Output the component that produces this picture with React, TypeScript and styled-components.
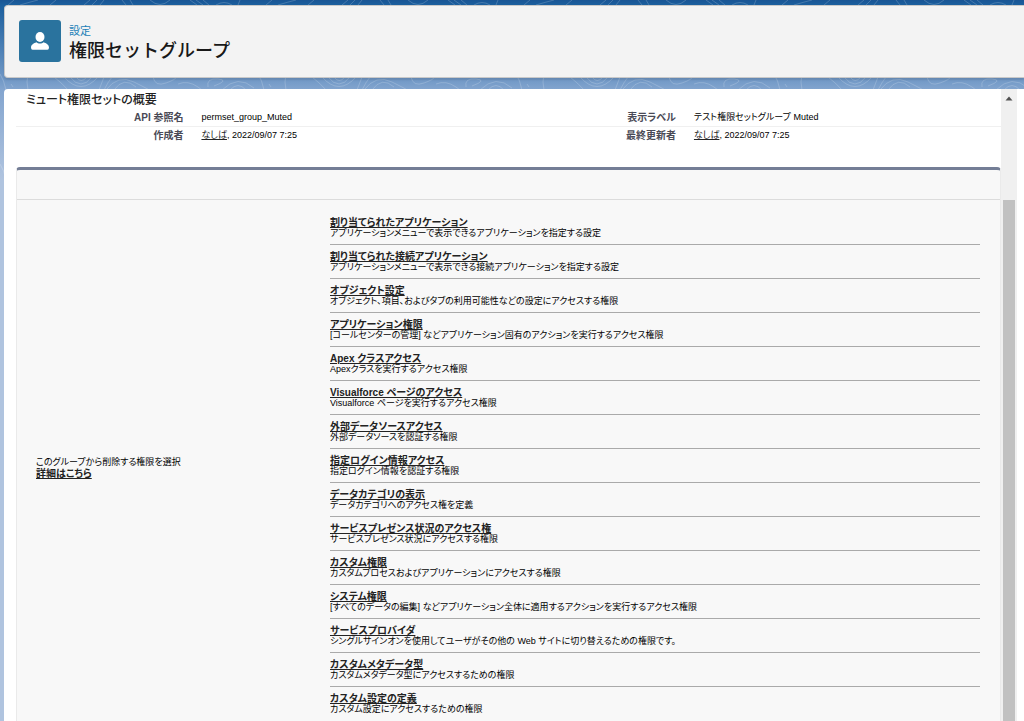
import React from 'react';
import styled, { createGlobalStyle } from 'styled-components';

const Global = createGlobalStyle`
  * { box-sizing: border-box; }
  body {
    margin: 0;
    font-family: "Liberation Sans", "Noto Sans CJK JP", sans-serif;
    font-size: 9px;
    line-height: 11px;
    color: #000;
  }
`;

const Page = styled.div`
  position: relative;
  height: 100vh;
  display: flex;
  flex-direction: column;
  gap: 11px;
  padding: 5px 0 0 4px;
  overflow: hidden;
  background: linear-gradient(#195594 0, #1b5f9e 5px, #6f97c5 78px, #83a5cf 90px, #b0c4df 180px);
`;

const Contours = styled.svg`
  position: absolute;
  top: 0;
  left: 0;
  width: 100%;
  height: 180px;
`;

const Header = styled.header`
  position: relative;
  display: flex;
  align-items: flex-start;
  gap: 8px;
  flex: none;
  padding: 14px 14px 15px;
  border: 1px solid #c9c9c9;
  border-right: 0;
  border-radius: 4px 0 0 4px;
  background: #f3f3f3;
  box-shadow: 0 2px 2px rgba(0, 0, 0, 0.1);
`;

const Badge = styled.span`
  display: grid;
  place-items: center;
  width: 42px;
  height: 42px;
  border-radius: 3px;
  background: #2a739e;
`;

const HeaderText = styled.div`
  padding-top: 2px;
`;

const Eyebrow = styled.p`
  margin: 0;
  font-size: 11px;
  line-height: 18px;
  color: #1b7fb8;
`;

const Title = styled.h1`
  margin: 0;
  font-size: 18px;
  line-height: 22px;
  font-weight: 500;
  color: #181818;
`;

const Body = styled.div`
  position: relative;
  flex: 1;
  min-height: 0;
  display: flex;
  padding-right: 7px;
  border-top-left-radius: 4px;
  background: #fff;
`;

const Main = styled.main`
  flex: 1;
  min-width: 0;
  overflow: hidden;
  padding-left: 12px;
  font-feature-settings: "palt";
`;

const Heading = styled.h2`
  margin: 0;
  padding: 3px 10px 1px;
  font-size: 12px;
  line-height: 16px;
  font-weight: 500;
  color: #222;
`;

const Details = styled.dl`
  margin: 0 0 23px;
`;

const DetailRow = styled.div`
  display: grid;
  grid-template-columns: 17fr 33fr 17fr 33fr;
  line-height: 17px;
  & + & { border-top: 1px solid #f0f0f0; }
`;

const Term = styled.dt`
  text-align: right;
  font-size: 10px;
  font-weight: 700;
  color: #4a4a56;
`;

const Value = styled.dd`
  margin: 0;
  padding-left: 18px;
`;

const Link = styled.a<{ $strong?: boolean }>`
  color: #222;
  font-size: ${p => (p.$strong ? '10px' : 'inherit')};
  font-weight: ${p => (p.$strong ? 700 : 400)};
  text-decoration: underline;
  text-decoration-thickness: 1px;
  text-underline-offset: 1px;
`;

const Panel = styled.section`
  border: 1px solid #eaeaea;
  border-top: 3px solid #747e96;
  border-radius: 4px;
  background: #f8f8f8;
`;

const PanelBar = styled.div`
  height: 30px;
  border-bottom: 1px solid #dcdcdc;
`;

const PanelBody = styled.div`
  display: grid;
  grid-template-columns: 313px 1fr;
  align-items: center;
  padding: 11px 20px 15px 0;
`;

const Intro = styled.p`
  margin: 0;
  padding: 4px 0 0 19px;
`;

const List = styled.ul`
  margin: 0;
  padding: 0;
  list-style: none;
`;

const Item = styled.li`
  padding: 6px 0 5px;
  border-bottom: 1px solid #aaa;
  &:last-child { border-color: transparent; }
`;

const Line = styled.div`
  height: 11px;
  white-space: nowrap;
`;

const Scrollbar = styled.div`
  display: flex;
  flex-direction: column;
  align-items: center;
  width: 16px;
  background: #f0f0f0;
`;

const Arrow = styled.svg`
  flex: none;
  width: 16px;
  height: 18px;
  margin-bottom: 93px;
`;

const Thumb = styled.div`
  flex: 1;
  width: 12px;
  background: #c1c1c1;
`;

const items = [
  ['割り当てられたアプリケーション', 'アプリケーションメニューで表示できるアプリケーションを指定する設定'],
  ['割り当てられた接続アプリケーション', 'アプリケーションメニューで表示できる接続アプリケーションを指定する設定'],
  ['オブジェクト設定', 'オブジェクト、項目、およびタブの利用可能性などの設定にアクセスする権限'],
  ['アプリケーション権限', '[コールセンターの管理] などアプリケーション固有のアクションを実行するアクセス権限'],
  ['Apex クラスアクセス', 'Apexクラスを実行するアクセス権限'],
  ['Visualforce ページのアクセス', 'Visualforce ページを実行するアクセス権限'],
  ['外部データソースアクセス', '外部データソースを認証する権限'],
  ['指定ログイン情報アクセス', '指定ログイン情報を認証する権限'],
  ['データカテゴリの表示', 'データカテゴリへのアクセス権を定義'],
  ['サービスプレゼンス状況のアクセス権', 'サービスプレゼンス状況にアクセスする権限'],
  ['カスタム権限', 'カスタムプロセスおよびアプリケーションにアクセスする権限'],
  ['システム権限', '[すべてのデータの編集] などアプリケーション全体に適用するアクションを実行するアクセス権限'],
  ['サービスプロバイダ', 'シングルサインオンを使用してユーザがその他の Web サイトに切り替えるための権限です。'],
  ['カスタムメタデータ型', 'カスタムメタデータ型にアクセスするための権限'],
  ['カスタム設定の定義', 'カスタム設定にアクセスするための権限'],
];

export default function App() {
  return (
    <Page>
      <Global />
      <Contours aria-hidden="true">
        <defs>
          <pattern id="contour" width="258" height="90" patternUnits="userSpaceOnUse">
            <g fill="none" stroke="#fff" strokeOpacity="0.18">
              <path d="M8 5L14 0M20 5Q30 2 38 0M50 5L56 0M84 5L90 0M92 5L97 0M100 5L104 0M122 0L126 5M130 0L133 5M150 0Q160 9 170 0M190 0L197 5M196 0L203 5M203 0L209 5M216 5Q224 0 232 5M238 5L240 0" />
              <path d="M0 74Q4 80 6 90M11 84L13 87M28 90Q26 82 28 74M54 77Q62 83 68 90M64 77Q81 96 98 77M70 77Q81 91 92 77M76 77Q81 84 87 77M99 90L104 77M104 90Q108 82 112 77M106 90Q118 74 134 82T149 90M114 90Q124 76 136 87M153 77Q155 87 166 83T176 77M178 84Q188 80 198 87L202 90M208 87Q206 78 218 79T214 86M222 90Q238 74 254 88M230 90Q238 81 246 90" />
            </g>
          </pattern>
        </defs>
        <rect width="100%" height="180" fill="url(#contour)" />
      </Contours>
      <Header>
        <Badge>
          <svg width="18" height="18" viewBox="0 0 18 18" fill="#fff" aria-hidden="true">
            <ellipse cx="9" cy="5" rx="4.500" ry="5" />
            <path d="M0 15.500c0-3 3-4.300 5.300-5.300c1 .9 2.300 1.300 3.700 1.300s2.700-.4 3.700-1.300C15 11.200 18 12.500 18 15.500q0 2.300-1.600 2.300H1.600Q0 17.800 0 15.500z" />
          </svg>
        </Badge>
        <HeaderText>
          <Eyebrow>設定</Eyebrow>
          <Title>権限セットグループ</Title>
        </HeaderText>
      </Header>
      <Body>
        <Main>
          <Heading>ミュート権限セットの概要</Heading>
          <Details>
            <DetailRow>
              <Term>API 参照名</Term>
              <Value>permset_group_Muted</Value>
              <Term>表示ラベル</Term>
              <Value>テスト権限セットグループ Muted</Value>
            </DetailRow>
            <DetailRow>
              <Term>作成者</Term>
              <Value><Link href="#user">なしば</Link>, 2022/09/07 7:25</Value>
              <Term>最終更新者</Term>
              <Value><Link href="#user">なしば</Link>, 2022/09/07 7:25</Value>
            </DetailRow>
          </Details>
          <Panel>
            <PanelBar />
            <PanelBody>
              <Intro>
                このグループから削除する権限を選択
                <br />
                <Link $strong href="#help">詳細はこちら</Link>
              </Intro>
              <List>
                {items.map(([name, text]) => (
                  <Item key={name}>
                    <Line><Link $strong href="#item">{name}</Link></Line>
                    <Line>{text}</Line>
                  </Item>
                ))}
              </List>
            </PanelBody>
          </Panel>
        </Main>
        <Scrollbar aria-hidden="true">
          <Arrow viewBox="0 0 16 18"><path d="M4.500 11.500L8 7.500L11.500 11.500z" fill="#505050" /></Arrow>
          <Thumb />
        </Scrollbar>
      </Body>
    </Page>
  );
}
